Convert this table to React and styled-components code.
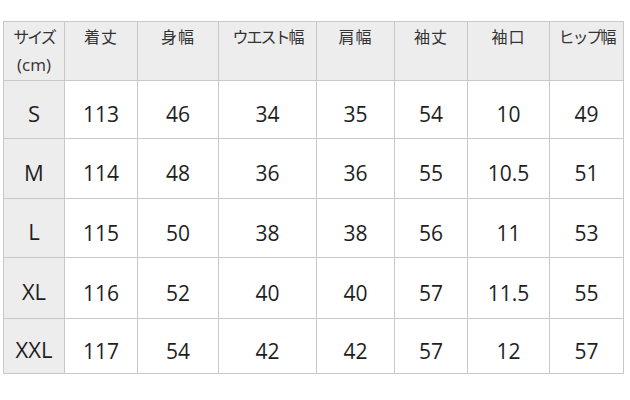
import React from 'react';
import styled, { createGlobalStyle } from 'styled-components';

const GlobalStyle = createGlobalStyle`
	body {
		margin: 0;
		background: #fff;
		font-family: 'Open Sans', 'Noto Sans CJK JP', sans-serif;
		color: #222;
	}
`;

// katakana headings are set tighter, like the proportional font in the shot
const headers = [
	{ text: '着丈' },
	{ text: '身幅' },
	{ text: 'ウエスト幅', tight: true },
	{ text: '肩幅' },
	{ text: '袖丈' },
	{ text: '袖口' },
	{ text: 'ヒップ幅', tight: true },
];
const widths = [61, 73, 81, 98, 78, 73, 82, 74];

const rows = [
	{ size: 'S', h: 58, values: ['113', '46', '34', '35', '54', '10', '49'] },
	{ size: 'M', h: 60, values: ['114', '48', '36', '36', '55', '10.5', '51'] },
	{ size: 'L', h: 59, values: ['115', '50', '38', '38', '56', '11', '53'] },
	{ size: 'XL', h: 61, values: ['116', '52', '40', '40', '57', '11.5', '55'] },
	{ size: 'XXL', h: 55, values: ['117', '54', '42', '42', '57', '12', '57'] },
];

function App() {
	return (
		<Page>
			<GlobalStyle />
			<Table>
				<colgroup>
					{widths.map((w, i) => <col key={i} style={{ width: w }} />)}
				</colgroup>
				<thead>
					<Row $h={59}>
						<HeadCell $tight>サイズ<br /><Unit>(cm)</Unit></HeadCell>
						{headers.map((h) => <HeadCell key={h.text} $tight={h.tight}>{h.text}</HeadCell>)}
					</Row>
				</thead>
				<tbody>
					{rows.map((r) => (
						<Row key={r.size} $h={r.h}>
							<SizeCell>{r.size}</SizeCell>
							{r.values.map((v, i) => <Cell key={i}>{v}</Cell>)}
						</Row>
					))}
				</tbody>
			</Table>
		</Page>
	);
}

const Page = styled.div`
	padding: 21px 0 0 3px;
`;

const Table = styled.table`
	border-collapse: collapse;
	table-layout: fixed;
	width: 620px;
`;

const Row = styled.tr`
	height: ${(p) => p.$h}px;
`;

const HeadCell = styled.th`
	border: 1px solid #c9c9c9;
	background: #eeedee;
	font-weight: 400;
	font-size: 16px;
	line-height: 28px;
	letter-spacing: ${(p) => (p.$tight ? '-2px' : '1px')};
	padding: 1px 0 0;
	vertical-align: top;
	text-align: center;
	color: #333;
	white-space: nowrap;
	overflow: hidden;
`;

const Unit = styled.span`
	font-size: 17px;
	letter-spacing: 0;
`;

const Cell = styled.td`
	border: 1px solid #c9c9c9;
	font-size: 21px;
	text-align: center;
	vertical-align: middle;
	padding: 9px 0 0;
	color: #1e1e1e;
`;

const SizeCell = styled(Cell)`
	background: #eeedee;
	font-size: 22px;
	padding-top: 6px;
`;

export default App;
